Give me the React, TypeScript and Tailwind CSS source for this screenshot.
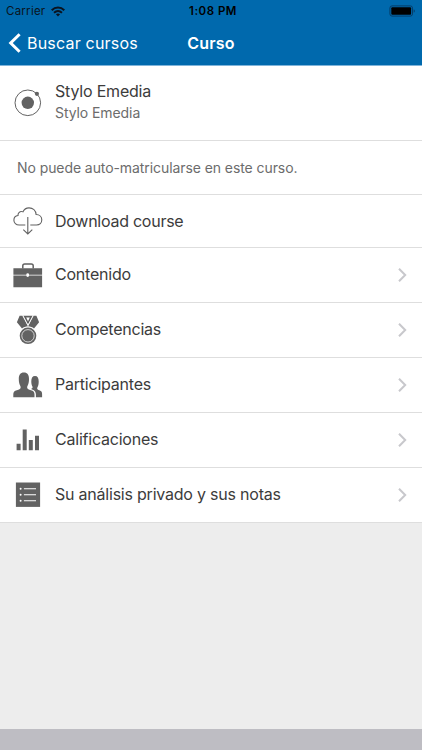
import React from 'react';

interface IItemProps {
  title: string;
  icon: React.ReactNode;
}

function Icon({ children }: { children: React.ReactNode }) {
  return (
    <svg
      className="w-[30px] h-[30px] shrink-0 text-[#626262]"
      viewBox="0 0 30 30"
      fill="currentColor"
    >
      {children}
    </svg>
  );
}

const CourseIcon = () => (
  <Icon>
    <circle cx="14.8" cy="14.8" r="12.8" fill="none" stroke="currentColor" />
    <circle cx="14.8" cy="14.8" r="6.2" />
    <circle cx="23.9" cy="5.8" r="2.1" />
  </Icon>
);

const DownloadIcon = () => (
  <Icon>
    <g fill="none" stroke="currentColor" strokeWidth="1.1">
      <path d="M12.3 19H6.2C3 19 .9 16.9 .9 14.2c0-2.6 1.8-4.5 4.1-4.7C4.8 7 6.6 5.4 8.7 5.5c.5 0 .9.1 1.3.3C11.1 3.3 13.3 1.9 16 1.9c3.9 0 6.800 2.700 7.100 6.600 3.400.1 5.700 2.400 5.700 5.300 0 3-2.200 5.200-5.300 5.200h-6.200" />
      <path d="M14.8 11v16.8M10.3 23.7l4.5 4.2 4.5-4.2" />
    </g>
  </Icon>
);

const BriefcaseIcon = () => (
  <Icon>
    <path
      d="M9.800 8.500V5.800c0-1.200.7-1.900 1.900-1.900h6.600c1.200 0 1.900.7 1.900 1.900v2.700"
      fill="none"
      stroke="currentColor"
      strokeWidth="1.5"
    />
    <path d="M.4 8.300h28.700v6.400H16.100a1.400 1.400 0 0 0-2.800 0H.4zM.4 15.500h12.900a1.400 1.400 0 0 0 2.800 0h13v11.700H.4z" />
    <circle cx="14.7" cy="15.1" r=".9" fill="white" />
  </Icon>
);

const MedalIcon = () => (
  <Icon>
    <path d="M6.600.8h2.900L15 11.300c-2.400.1-4.400.9-6 2.300L3.900 7.200z" />
    <path d="M23.400.8h-2.900L15 11.300c2.400.1 4.400.9 6 2.300l5.100-6.400z" />
    <path d="M10.300.8h9.400L15 9.600z" />
    <path d="M13.200 2.500h3.600L15 6.200z" fill="white" />
    <path d="M9.900.8 15 10.500 20.100.8" fill="none" stroke="white" strokeWidth=".7" />
    <circle cx="15" cy="20.8" r="8.9" fill="white" />
    <circle cx="15" cy="20.8" r="8.3" />
    <circle cx="15" cy="20.8" r="6.2" fill="none" stroke="white" strokeWidth=".7" />
  </Icon>
);

const PeopleIcon = () => (
  <Icon>
    <path d="M.3 27.200v-2.600c0-2.300.8-3.300 2.700-4 2.300-.8 4.300-1.200 4.600-2.500.2-1 0-1.700-.5-2.600-.8-1.400-1.300-3.400-1.300-6.400 0-4.200 1.400-6.600 5.100-6.600s5.100 2.400 5.100 6.600c0 3-.5 5-1.300 6.400-.5.900-.7 1.600-.5 2.600.3 1.300 2.300 1.700 4.600 2.500 1.900.7 2.700 1.700 2.700 4v2.600z" />
    <path d="M22.900 27.200v-2.400c0-2.700-1-4.200-3.800-5.200-.8-.3-1.100-.6-.4-1 .9-.4 1.100-1.200.7-2-.7-1.200-1.100-2.900-1.100-5 0-3.600 1-5.600 3.700-5.600s3.700 2 3.700 5.600c0 2.500-.4 4.200-1.100 5.400-.5.800-.5 1.400-.3 2 .4 1 1.600 1.200 3 1.700 1.400.6 1.800 1.500 1.800 3.500v3z" />
  </Icon>
);

const StatsIcon = () => (
  <Icon>
    <path d="M3.6 18.8h4v6.400h-4zM9.700 4.600h4v20.600h-4zM15.800 15h4v10.200h-4zM22 10.700h4v14.500h-4z" />
  </Icon>
);

const NotesIcon = () => (
  <Icon>
    <path d="M2.9 2.5h24.200v24.400H2.900z" />
    <g stroke="white" strokeWidth="1.1">
      <path d="M10.900 8.700H23M10.900 14.700H23M10.900 20.700H23" />
    </g>
    <g fill="white">
      <circle cx="7.6" cy="8.7" r="1" />
      <circle cx="7.6" cy="14.7" r="1" />
      <circle cx="7.6" cy="20.7" r="1" />
    </g>
  </Icon>
);

const Item = ({ title, icon }: IItemProps) => (
  <li className="flex items-center h-[55px] pl-[13px] pr-[15px] border-b border-[#dedede]">
    {icon}
    <span className="ml-3 flex-1 pb-[3px] tracking-[-0.22px]">{title}</span>
    <svg
      className="w-2.5 h-4 text-[#c8c8cc]"
      viewBox="0 0 10 16"
      fill="none"
      stroke="currentColor"
      strokeWidth="2"
    >
      <path d="m2 1.700 6.200 6.300L2 14.300" />
    </svg>
  </li>
);

function App() {
  return (
    <div className="h-[750px] w-full flex flex-col bg-[#ededed] font-['Inter',sans-serif] text-base text-[#3c3c3c]">
      <header className="h-[66px] bg-[#0069ad] border-b border-[#7fb4da]">
        <div className="grid grid-cols-3 items-center h-[22px] px-1.5 text-[11.5px] text-[#0a1420]">
          <div className="flex items-center gap-1.5">
            <span className="pt-0.5 tracking-[0.25px]">Carrier</span>
            <svg className="w-3.5 h-[11px]" viewBox="0 0 14 11" fill="none" stroke="currentColor">
              <path d="M.7 4.200c3.700-3.500 8.900-3.500 12.600 0" strokeWidth="2" />
              <path d="M3 6.800c2.400-2.200 5.600-2.200 8 0" strokeWidth="1.9" />
              <path d="M4.900 8.300c1.300-1 2.900-1 4.200 0L7 10.500z" fill="currentColor" stroke="none" />
            </svg>
          </div>
          <span className="pl-1 pt-0.5 text-center font-semibold tracking-[0.5px] text-black">1:08 PM</span>
          <svg className="justify-self-end w-[27px] h-3" viewBox="0 0 27 12">
            <rect x=".9" y=".9" width="22.6" height="10.2" rx="2.2" fill="none" stroke="#043d69" />
            <rect x="2.3" y="2.3" width="19.8" height="7.4" rx="1" fill="black" />
            <path d="M24.700 4.200c1.500.6 1.500 3 0 3.600z" fill="#043d69" />
          </svg>
        </div>
        <div className="grid grid-cols-3 items-center h-[42px] text-white">
          <button className="flex items-center pl-2 whitespace-nowrap tracking-[0.2px]">
            <svg className="w-[13px] h-5 mr-1.5" viewBox="0 0 13 20" fill="none" stroke="currentColor" strokeWidth="3">
              <path d="M11.600 1.200 2.700 10l8.900 8.800" />
            </svg>
            Buscar cursos
          </button>
          <h1 className="text-center font-semibold tracking-[0.2px]">Curso</h1>
        </div>
      </header>

      <main className="flex-1">
        <div className="flex items-center h-[75px] pl-[13px] bg-white border-b border-[#dedede]">
          <CourseIcon />
          <div className="ml-3 pb-[3px]">
            <h2 className="leading-[22px] tracking-[-0.2px]">Stylo Emedia</h2>
            <p className="text-sm leading-[22px] tracking-[-0.08px] text-[#6c6c6c]">Stylo Emedia</p>
          </div>
        </div>
        <p className="flex items-center h-[54px] pl-[17px] bg-white border-b border-[#dedede] text-sm tracking-[-0.08px] text-[#6c6c6c]">
          No puede auto-matricularse en este curso.
        </p>
        <button className="flex items-center w-full h-[53px] pl-[13px] bg-white border-b border-[#dedede]">
          <DownloadIcon />
          <span className="ml-3 tracking-[-0.26px]">Download course</span>
        </button>
        <ul className="bg-white">
          <Item title="Contenido" icon={<BriefcaseIcon />} />
          <Item title="Competencias" icon={<MedalIcon />} />
          <Item title="Participantes" icon={<PeopleIcon />} />
          <Item title="Calificaciones" icon={<StatsIcon />} />
          <Item title="Su análisis privado y sus notas" icon={<NotesIcon />} />
        </ul>
      </main>

      <footer className="h-[21px] bg-[#bebdc3]" />
    </div>
  );
}

export default App;
